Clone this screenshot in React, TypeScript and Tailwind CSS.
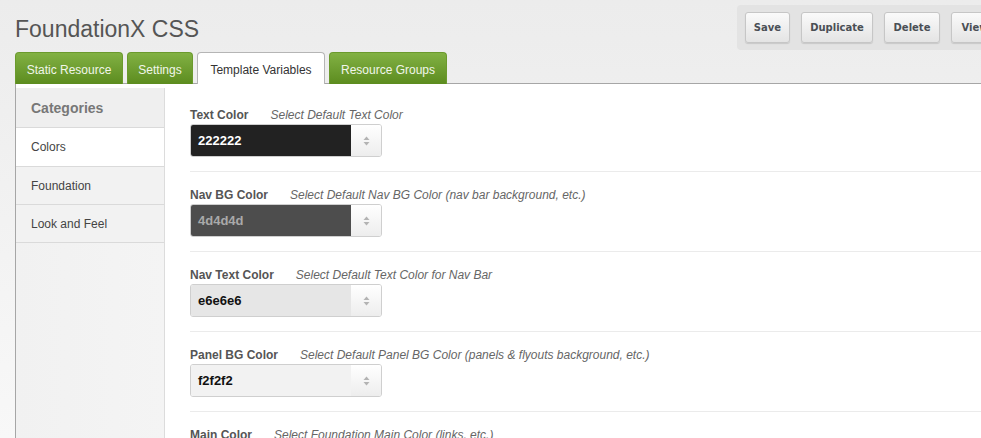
const buttons = [
	{ label: 'Save', width: 'w-[45px]' },
	{ label: 'Duplicate', width: 'w-[72px]' },
	{ label: 'Delete', width: 'w-[56px]' },
	{ label: 'View', width: 'w-[48px]' },
]

const tabs = [
	{ label: 'Static Resource', width: 'w-[108px]', active: false },
	{ label: 'Settings', width: 'w-[66px]', active: false },
	{ label: 'Template Variables', width: 'w-[128px]', active: true },
	{ label: 'Resource Groups', width: 'w-[118px]', active: false },
]

const categories = ['Colors', 'Foundation', 'Look and Feel']

const variables = [
	{
		label: 'Text Color',
		description: 'Select Default Text Color',
		value: '222222',
		swatch: 'bg-[#222222]',
		text: 'text-white',
	},
	{
		label: 'Nav BG Color',
		description: 'Select Default Nav BG Color (nav bar background, etc.)',
		value: '4d4d4d',
		swatch: 'bg-[#4d4d4d]',
		text: 'text-[#a9a9a9]',
	},
	{
		label: 'Nav Text Color',
		description: 'Select Default Text Color for Nav Bar',
		value: 'e6e6e6',
		swatch: 'bg-[#e6e6e6]',
		text: 'text-[#111]',
	},
	{
		label: 'Panel BG Color',
		description: 'Select Default Panel BG Color (panels & flyouts background, etc.)',
		value: 'f2f2f2',
		swatch: 'bg-[#f2f2f2]',
		text: 'text-[#111]',
	},
	{
		label: 'Main Color',
		description: 'Select Foundation Main Color (links, etc.)',
		value: '2ba6cb',
		swatch: 'bg-[#2ba6cb]',
		text: 'text-white',
	},
]

const Spinner = () => (
	<svg width="7" height="10" viewBox="0 0 7 10" className="fill-[#b3b3b3]">
		<path d="M3.5 0.5 L6.5 4 H0.5 Z" />
		<path d="M0.5 6 H6.5 L3.5 9.5 Z" />
	</svg>
)

export default function App() {
	return (
		<div className="w-[981px] h-[438px] overflow-hidden bg-gradient-to-b from-[#ececec] to-[#f8f8f8] font-['Liberation_Sans',Arial,sans-serif]">
			<div className="flex items-start">
				<h1 className="w-[737px] shrink-0 pl-[15px] mt-[15px] text-[23px] leading-[28px] text-[#555]">
					FoundationX CSS
				</h1>
				<div className="mt-[5px] h-[45px] shrink-0 flex items-start gap-[11px] rounded-[4px] bg-[#e3e3e3] pl-[8px] pr-[8px] pt-[7px]">
					{buttons.map((b) => (
						<button
							key={b.label}
							className={`${b.width} h-[31px] rounded-[3px] border border-[#c6c6c6] bg-gradient-to-b from-[#fafafa] to-[#e4e4e4] shadow-[0_1px_1px_rgba(0,0,0,0.12)] text-[10px] font-bold text-[#4a4f55] font-['DejaVu_Sans',Verdana,sans-serif]`}
						>
							{b.label}
						</button>
					))}
				</div>
			</div>

			<div className="mt-[2px] ml-[15px] flex gap-[4px] border-b border-[#a6a6a6]">
				{tabs.map((t) =>
					t.active ? (
						<div
							key={t.label}
							className={`${t.width} h-[32px] -mb-px rounded-t-[4px] border border-b-0 border-[#b5b5b5] bg-white text-center text-[12px] leading-[34px] text-[#333]`}
						>
							{t.label}
						</div>
					) : (
						<div
							key={t.label}
							className={`${t.width} h-[32px] -mb-px rounded-t-[4px] border border-b-0 border-[#6b9a2d] bg-gradient-to-b from-[#82b143] to-[#5c8c1e] text-center text-[12px] leading-[34px] text-[#f1f6ea]`}
						>
							{t.label}
						</div>
					),
				)}
			</div>

			<div className="ml-[15px] h-[360px] flex bg-white border-l border-[#a6a6a6]">
				<aside className="mt-[4px] w-[149px] shrink-0 bg-gradient-to-r from-[#f1f1f1] to-[#f4f4f4] border-r border-[#dcdcdc]">
					<div className="h-[40px] pl-[15px] pt-[2px] flex items-center border-b border-[#dadada] bg-[#efefef] text-[14px] font-bold text-[#777]">
						Categories
					</div>
					{categories.map((c, i) => (
						<div
							key={c}
							className={`${i === 0 ? 'h-[39px]' : 'h-[38px]'} pl-[15px] flex items-center border-b border-[#dadada] text-[12px] text-[#444] ${
								i === 0 ? 'bg-white' : 'bg-[#f2f2f2]'
							}`}
						>
							{c}
						</div>
					))}
				</aside>

				<main className="flex-1 pl-[25px] pt-[8px]">
					{variables.map((v) => (
						<div key={v.label} className="pt-[14px] pb-[14px] border-b border-[#ebebeb]">
							<div className="flex text-[12px] leading-[18px]">
								<span className="font-bold text-[#555]">{v.label}</span>
								<span className="ml-[22px] italic text-[#666]">{v.description}</span>
							</div>
							<div className="w-[192px] h-[33px] flex rounded-[3px] border border-[#cfcfcf] overflow-hidden">
								<div
									className={`w-[160px] flex items-center pl-[7px] text-[13px] font-bold ${v.swatch} ${v.text}`}
								>
									{v.value}
								</div>
								<div className="flex-1 flex items-center justify-center bg-gradient-to-b from-white to-[#ededed]">
									<Spinner />
								</div>
							</div>
						</div>
					))}
				</main>
			</div>
		</div>
	)
}
